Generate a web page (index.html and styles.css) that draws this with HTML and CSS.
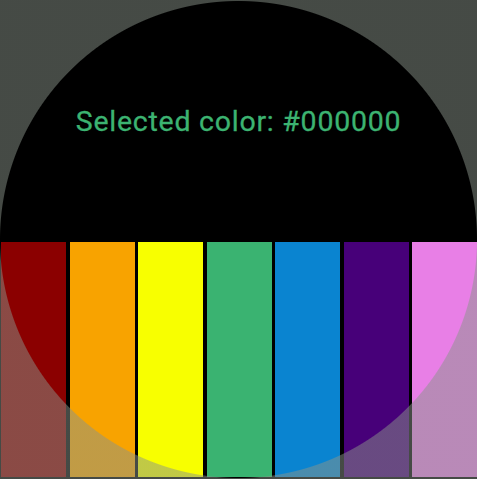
FILE: index.html
```html
<!DOCTYPE html>
<html>
<head>
<meta charset="utf-8">
<link rel="stylesheet" href="styles.css">
</head>
<body>
<div class="screen">
  <div class="header">
    <div class="label">Selected color: #000000</div>
  </div>
  <div class="bars">
    <div class="bar red"></div>
    <div class="bar orange"></div>
    <div class="bar yellow"></div>
    <div class="bar green"></div>
    <div class="bar blue"></div>
    <div class="bar purple"></div>
    <div class="bar pink"></div>
  </div>
  <div class="bezel"></div>
</div>
</body>
</html>
```

FILE: styles.css
```css
html, body {
  margin: 0;
  padding: 0;
  background: #000;
}
.screen {
  position: relative;
  width: 477px;
  height: 479px;
  background: #000;
  display: flex;
  flex-direction: column;
  overflow: hidden;
}
.header {
  height: 242px;
  display: flex;
  align-items: center;
  justify-content: center;
}
.label {
  font-family: Roboto, "Liberation Sans", sans-serif;
  font-weight: 400;
  font-size: 28.5px;
  letter-spacing: 0.75px;
  color: #3cb371;
  -webkit-text-stroke: 0.3px #3cb371;
}
.bars {
  height: 235px;
  display: flex;
  gap: 3.5px;
  padding-left: 1px;
}
.bar { flex: 1; }
.red { background: #8b0000; }
.orange { background: #f8a300; }
.yellow { background: #f8ff00; }
.green { background: #3ab371; }
.blue { background: #0a84d0; }
.purple { background: #470079; }
.pink { background: #e87fe6; }
.bezel {
  position: absolute;
  inset: 0;
  background: radial-gradient(circle at 238.5px 239.5px, transparent 238px, rgba(138,148,138,0.5) 239px);
}
```
